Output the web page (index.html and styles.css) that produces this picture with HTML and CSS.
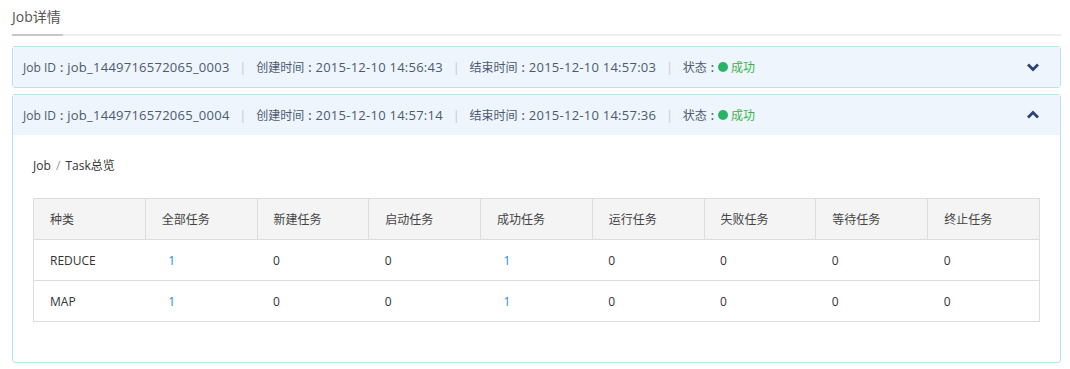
FILE: index.html
```html
<!DOCTYPE html>
<html lang="zh-CN">
<head>
    <meta charset="UTF-8">
    <title>Job详情</title>
    <link rel="stylesheet" href="styles.css">
</head>
<body>
    <div class="page">
        <div class="tabs">
            <span class="tab active">Job详情</span>
        </div>

        <div class="job-panel">
            <div class="job-head">
                <div class="job-meta">
                    <span class="label">Job ID<span class="colon">:</span></span><span class="val">job_1449716572065_0003</span>
                    <span class="sep">|</span>
                    <span class="label">创建时间<span class="colon">:</span></span><span class="val">2015-12-10 14:56:43</span>
                    <span class="sep">|</span>
                    <span class="label">结束时间<span class="colon">:</span></span><span class="val">2015-12-10 14:57:03</span>
                    <span class="sep">|</span>
                    <span class="label">状态<span class="colon">:</span></span><i class="dot"></i><em class="ok">成功</em>
                </div>
                <svg class="chevron" width="14" height="10" viewBox="0 0 14 10">
                    <path d="M2 2.5 L7 7.5 L12 2.5" fill="none" stroke="#2c4474" stroke-width="2.8"/>
                </svg>
            </div>
        </div>

        <div class="job-panel open">
            <div class="job-head">
                <div class="job-meta">
                    <span class="label">Job ID<span class="colon">:</span></span><span class="val">job_1449716572065_0004</span>
                    <span class="sep">|</span>
                    <span class="label">创建时间<span class="colon">:</span></span><span class="val">2015-12-10 14:57:14</span>
                    <span class="sep">|</span>
                    <span class="label">结束时间<span class="colon">:</span></span><span class="val">2015-12-10 14:57:36</span>
                    <span class="sep">|</span>
                    <span class="label">状态<span class="colon">:</span></span><i class="dot"></i><em class="ok">成功</em>
                </div>
                <svg class="chevron" width="14" height="10" viewBox="0 0 14 10">
                    <path d="M2 7.5 L7 2.5 L12 7.5" fill="none" stroke="#2c4474" stroke-width="2.8"/>
                </svg>
            </div>
            <div class="job-body">
                <h3 class="crumb">Job <span class="slash">/</span> Task总览</h3>
                <table class="task-table">
                    <thead>
                        <tr>
                            <th>种类</th>
                            <th>全部任务</th>
                            <th>新建任务</th>
                            <th>启动任务</th>
                            <th>成功任务</th>
                            <th>运行任务</th>
                            <th>失败任务</th>
                            <th>等待任务</th>
                            <th>终止任务</th>
                        </tr>
                    </thead>
                    <tbody>
                        <tr>
                            <td>REDUCE</td>
                            <td><a class="link">1</a></td>
                            <td>0</td>
                            <td>0</td>
                            <td><a class="link">1</a></td>
                            <td>0</td>
                            <td>0</td>
                            <td>0</td>
                            <td>0</td>
                        </tr>
                        <tr>
                            <td>MAP</td>
                            <td><a class="link">1</a></td>
                            <td>0</td>
                            <td>0</td>
                            <td><a class="link">1</a></td>
                            <td>0</td>
                            <td>0</td>
                            <td>0</td>
                            <td>0</td>
                        </tr>
                    </tbody>
                </table>
            </div>
        </div>
    </div>
</body>
</html>
```

FILE: styles.css
```css
* {
    margin: 0;
    padding: 0;
    box-sizing: border-box;
}

body {
    font-family: "Open Sans", "Noto Sans CJK SC", sans-serif;
    font-size: 12px;
    color: #333;
    background: #fff;
}

.page {
    padding: 0 9px 0 12px;
}

.tabs {
    height: 36px;
    border-bottom: 2px solid #eee;
    display: flex;
    align-items: flex-end;
}

.tab {
    font-size: 14px;
    color: #555;
    line-height: 24px;
    padding-bottom: 5px;
    margin-bottom: -2px;
}

.tab.active {
    border-bottom: 2px solid #c8c8c8;
    padding-right: 2px;
}

.job-panel {
    margin-top: 10px;
    border: 1px solid #b6e4ee;
    border-radius: 3px;
}

.job-panel + .job-panel {
    margin-top: 6px;
}

.job-head {
    height: 40px;
    background: #eff5fc;
    display: flex;
    align-items: center;
    justify-content: space-between;
    padding: 0 20px 0 10px;
}

.job-meta {
    color: #4a5b70;
    display: flex;
    align-items: center;
    white-space: pre;
}

.colon {
    margin: 0 4px;
    font-weight: 600;
}

.val {
    font-size: 13px;
    letter-spacing: 0.25px;
}

.sep {
    color: #c6c6ce;
    margin: 0 10px;
}

.dot {
    display: inline-block;
    width: 10px;
    height: 10px;
    border-radius: 50%;
    background: #2bb468;
    margin-right: 3px;
}

.ok {
    font-style: normal;
    color: #39b44a;
}

.chevron {
    display: block;
}

.job-body {
    padding: 21px 20px 40px;
}

.crumb {
    font-weight: normal;
    font-size: 12px;
    line-height: 20px;
    color: #333;
    margin-bottom: 22px;
}

.slash {
    color: #999;
    margin: 0 2px;
}

.task-table {
    width: 100%;
    border-collapse: collapse;
    table-layout: fixed;
}

.task-table th,
.task-table td {
    height: 41px;
    border: 1px solid #ddd;
    text-align: left;
    font-weight: normal;
    padding: 0 16px;
}

.task-table th {
    background: #f4f4f4;
    color: #444;
}

.task-table td {
    border-left: none;
    border-right: none;
    color: #333;
}

.task-table td:first-child {
    border-left: 1px solid #ddd;
}

.task-table td:last-child {
    border-right: 1px solid #ddd;
}

.link {
    color: #1f8ceb;
    padding-left: 7px;
    cursor: pointer;
}
```
